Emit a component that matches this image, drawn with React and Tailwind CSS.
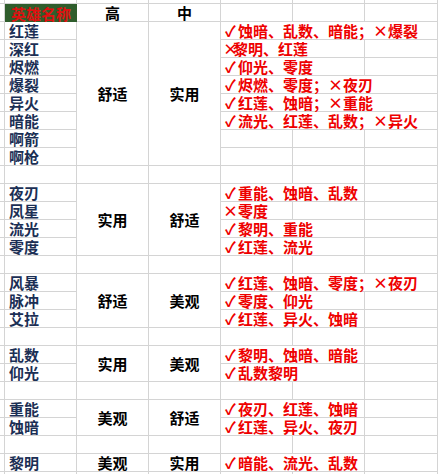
import React from "react";

const line = "border-r border-b border-[#d4d4d4]";

const groups = [
  {
    names: ["红莲", "深红", "烬燃", "爆裂", "异火", "暗能", "啊箭", "啊枪"],
    b: "舒适",
    c: "实用",
    notes: [
      "✓蚀暗、乱数、暗能；×爆裂",
      "x黎明、红莲",
      "✓仰光、零度",
      "✓烬燃、零度；×夜刃",
      "✓红莲、蚀暗；×重能",
      "✓流光、红莲、乱数；×异火",
      "",
      "",
    ],
  },
  {
    names: ["夜刃", "凤星", "流光", "零度"],
    b: "实用",
    c: "舒适",
    notes: ["✓重能、蚀暗、乱数", "×零度", "✓黎明、重能", "✓红莲、流光"],
  },
  {
    names: ["风暴", "脉冲", "艾拉"],
    b: "舒适",
    c: "美观",
    notes: ["✓红莲、蚀暗、零度；×夜刃", "✓零度、仰光", "✓红莲、异火、蚀暗"],
  },
  {
    names: ["乱数", "仰光"],
    b: "实用",
    c: "美观",
    notes: ["✓黎明、蚀暗、暗能", "✓乱数黎明"],
  },
  {
    names: ["重能", "蚀暗"],
    b: "美观",
    c: "舒适",
    notes: ["✓夜刃、红莲、蚀暗", "✓红莲、异火、夜刃"],
  },
  {
    names: ["黎明"],
    b: "美观",
    c: "实用",
    notes: ["✓暗能、流光、乱数"],
  },
];

// full-width marks, the narrow "x" stands for the small cross
const renderNote = (text) =>
  text.split(/([✓×x])/).map((part, i) => {
    if (part === "✓" || part === "×")
      return (
        <span key={i} className="inline-block w-[15px] text-center">
          {part}
        </span>
      );
    if (part === "x")
      return (
        <span key={i} className="inline-block w-[10px]">
          ×
        </span>
      );
    return part;
  });

const EmptyRow = ({ h = "h-[18px]" }) => (
  <div className={`flex ${h}`}>
    <div className={`w-[5px] ${line}`} />
    <div className={`w-[72px] ${line}`} />
    <div className={`w-[72px] ${line}`} />
    <div className={`w-[72px] ${line}`} />
    <div className={`w-[72px] ${line}`} />
    <div className={`w-[72px] ${line}`} />
    <div className={`w-[73px] ${line}`} />
  </div>
);

const NoteRow = ({ text }) => (
  <div className="flex h-[18px]">
    <div className={`flex w-[72px] ${line}`}>
      {text && (
        <span className="relative z-10 flex h-full w-max items-center whitespace-nowrap bg-white pl-[2px] text-[#ee0000]">
          {renderNote(text)}
        </span>
      )}
    </div>
    <div className={`w-[72px] ${line}`} />
    <div className={`w-[73px] ${line}`} />
  </div>
);

const Group = ({ names, b, c, notes }) => (
  <div className="flex">
    <div className="flex w-[5px] flex-col">
      {names.map((n) => (
        <div key={n} className={`h-[18px] ${line}`} />
      ))}
    </div>
    <div className="flex w-[72px] flex-col">
      {names.map((n) => (
        <div
          key={n}
          className={`flex h-[18px] items-center pl-[4px] text-[#1b2f55] ${line}`}
        >
          {n}
        </div>
      ))}
    </div>
    <div className={`flex w-[72px] items-center justify-center text-black ${line}`}>
      {b}
    </div>
    <div className={`flex w-[72px] items-center justify-center text-black ${line}`}>
      {c}
    </div>
    <div className="flex flex-col">
      {notes.map((t, i) => (
        <NoteRow key={i} text={t} />
      ))}
    </div>
  </div>
);

export default function App() {
  return (
    <div className="h-[474px] w-[438px] overflow-hidden bg-white font-['Noto_Sans_CJK_SC',sans-serif] text-[15px] font-bold leading-[17px]">
      <EmptyRow h="h-[4px]" />
      <div className="flex h-[18px]">
        <div className={`w-[5px] ${line}`} />
        <div className="flex w-[72px] items-center justify-center bg-[#2f5d2c] text-[#e01010]">
          英雄名称
        </div>
        <div className={`flex w-[72px] items-center justify-center text-black ${line}`}>
          高
        </div>
        <div className={`flex w-[72px] items-center justify-center text-black ${line}`}>
          中
        </div>
        <div className={`w-[72px] ${line}`} />
        <div className={`w-[72px] ${line}`} />
        <div className={`w-[73px] ${line}`} />
      </div>
      {groups.map((g, i) => (
        <React.Fragment key={i}>
          <Group {...g} />
          {i < groups.length - 1 && <EmptyRow />}
        </React.Fragment>
      ))}
      <EmptyRow />
    </div>
  );
}
